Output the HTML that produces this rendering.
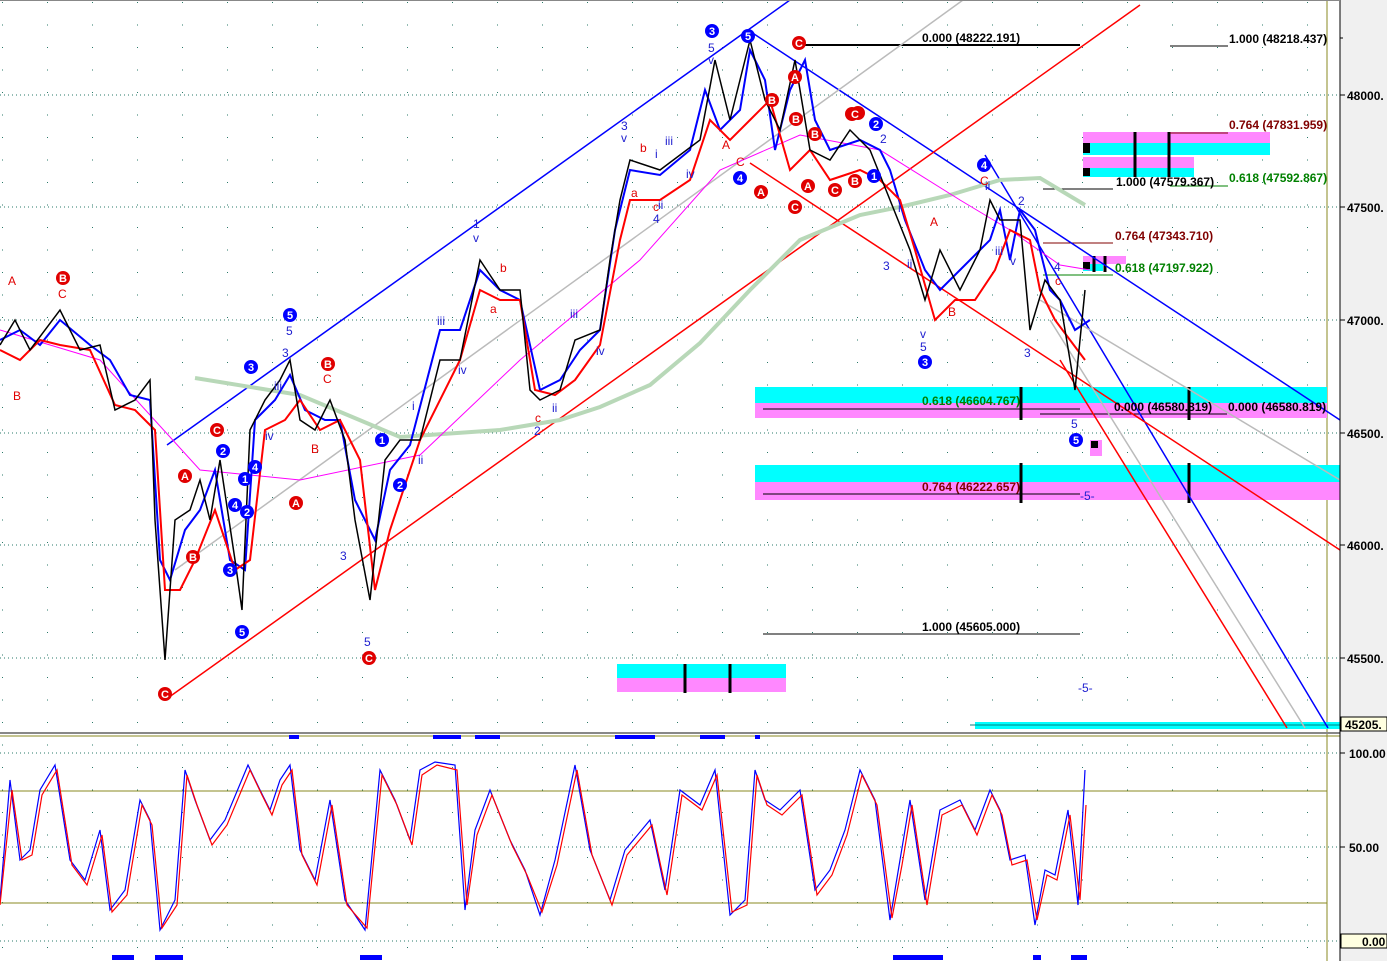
<!DOCTYPE html>
<html><head><meta charset="utf-8"><style>
html,body{margin:0;padding:0;background:#fff;width:1387px;height:961px;overflow:hidden}
svg{display:block;font-family:"Liberation Sans",sans-serif}
.t{font-size:12px;font-weight:bold}
.cl{font-size:11px;font-weight:bold;fill:#fff;text-anchor:middle}
.ax{font-size:12px;font-weight:bold;fill:#000}
</style></head><body>
<svg width="1387" height="961" viewBox="0 0 1387 961" xmlns="http://www.w3.org/2000/svg">
<defs>
<pattern id="dots" x="0" y="0" width="45" height="22.5" patternUnits="userSpaceOnUse"><rect x="2" y="2" width="1" height="1" fill="#2a7a6a"/></pattern>
</defs>
<rect width="1387" height="961" fill="#fff"/>
<rect x="0" y="0" width="1327" height="728" fill="url(#dots)"/>
<rect x="0" y="738" width="1327" height="223" fill="url(#dots)"/>
<g stroke="#2a7a6a" stroke-dasharray="1,3" stroke-width="1">
<line x1="0" y1="95" x2="1337" y2="95"/><line x1="0" y1="207" x2="1337" y2="207"/>
<line x1="0" y1="320" x2="1337" y2="320"/><line x1="0" y1="433" x2="1337" y2="433"/>
<line x1="0" y1="545" x2="1337" y2="545"/><line x1="0" y1="658" x2="1337" y2="658"/>
<line x1="0" y1="753" x2="1337" y2="753"/><line x1="0" y1="847" x2="1337" y2="847"/><line x1="0" y1="941" x2="1337" y2="941"/>
</g>
<line x1="0" y1="791" x2="1327" y2="791" stroke="#888820"/>
<line x1="0" y1="903" x2="1327" y2="903" stroke="#888820"/>
<line x1="1327" y1="0" x2="1327" y2="961" stroke="#888820"/>
<rect x="755" y="387" width="572" height="16" fill="#00ffff"/><rect x="755" y="403" width="572" height="15" fill="#ff88ff"/>
<rect x="755" y="465" width="585" height="17" fill="#00ffff"/><rect x="755" y="482" width="585" height="18" fill="#ff88ff"/>
<rect x="617" y="664" width="169" height="14" fill="#00ffff"/><rect x="617" y="678" width="169" height="14" fill="#ff88ff"/>
<rect x="1083" y="132" width="187" height="11" fill="#ff88ff"/><rect x="1083" y="143" width="187" height="12" fill="#00ffff"/>
<rect x="1083" y="157" width="111" height="11" fill="#ff88ff"/><rect x="1083" y="168" width="111" height="9" fill="#00ffff"/>
<rect x="1083" y="256" width="43" height="8" fill="#ff88ff"/><rect x="1083" y="264" width="20" height="7" fill="#00ffff"/>
<rect x="1090" y="440" width="12" height="16" fill="#ff88ff"/><rect x="1091" y="441" width="7" height="7" fill="#000"/>
<rect x="1083" y="143" width="7" height="10" fill="#000"/><rect x="1083" y="168" width="7" height="8" fill="#000"/><rect x="1083" y="262" width="7" height="7" fill="#000"/>
<rect x="975" y="722" width="365" height="7" fill="#00ffff"/><line x1="970" y1="725" x2="1340" y2="725" stroke="#008080"/>
<g stroke="#000" stroke-width="3">
<line x1="685" y1="664" x2="685" y2="693"/><line x1="730" y1="664" x2="730" y2="693"/>
<line x1="1135" y1="132" x2="1135" y2="177"/><line x1="1169" y1="132" x2="1169" y2="177"/>
<line x1="1021" y1="387" x2="1021" y2="420"/><line x1="1189" y1="387" x2="1189" y2="420"/>
<line x1="1021" y1="463" x2="1021" y2="503"/><line x1="1189" y1="463" x2="1189" y2="503"/>
<line x1="1094" y1="256" x2="1094" y2="272"/><line x1="1105" y1="256" x2="1105" y2="272"/>
</g>
<g stroke="#000" stroke-width="1">
<line x1="800" y1="45" x2="1080" y2="45" stroke-width="2"/><line x1="1170" y1="46" x2="1228" y2="46"/>
<line x1="1043" y1="189" x2="1113" y2="189"/><line x1="763" y1="634" x2="1080" y2="634"/>
<line x1="763" y1="409" x2="1080" y2="409"/><line x1="763" y1="494" x2="1080" y2="494"/>
<line x1="1040" y1="414" x2="1227" y2="414"/>
</g>
<line x1="1170" y1="133" x2="1228" y2="133" stroke="#800000"/>
<line x1="1043" y1="243" x2="1113" y2="243" stroke="#800000"/>
<line x1="1170" y1="186" x2="1228" y2="186" stroke="#008000"/>
<line x1="1043" y1="275" x2="1113" y2="275" stroke="#008000"/>
<g fill="none" stroke-width="1.5">
<polyline stroke="#00f" points="167,445 790,0"/>
<polyline stroke="#00f" points="748,30 1340,420"/>
<polyline stroke="#00f" points="985,155 1328,728"/>
<polyline stroke="#f00" points="165,700 1140,5"/>
<polyline stroke="#f00" points="750,163 1340,550"/>
<polyline stroke="#f00" points="1060,360 1287,728"/>
<polyline stroke="#bbb" points="175,570 963,0"/>
<polyline stroke="#bbb" points="1040,300 1340,480"/>
<polyline stroke="#bbb" points="1050,320 1305,728"/>
<polyline stroke="#b8d8b8" stroke-width="4" points="195,378 300,395 400,437 500,430 560,420 600,407 650,385 700,343 750,290 800,240 860,215 900,207 950,195 1000,180 1040,178 1085,205"/>
<polyline stroke="#ff00ff" stroke-width="1" points="0,330 100,360 200,470 300,480 420,455 520,360 640,260 720,170 800,135 880,150 960,200 1010,230 1060,265 1090,270"/>
</g>
<g fill="none" stroke-width="2">
<polyline stroke="#00f" points="0,340 20,330 40,345 60,320 90,345 110,360 130,395 150,400 160,560 170,580 185,530 200,510 215,470 230,560 245,570 255,420 275,400 290,375 305,410 325,420 340,420 355,500 375,540 390,470 410,445 440,330 460,330 480,270 500,290 520,300 540,390 560,380 580,350 600,330 615,230 630,170 660,175 690,150 705,90 720,130 740,110 750,50 765,80 775,150 790,90 805,60 815,120 830,150 860,140 880,150 890,170 905,220 925,270 940,290 960,270 990,240 1000,210 1010,260 1020,210 1035,230 1050,290 1060,300 1075,330 1090,320"/>
<polyline stroke="#f00" points="0,350 20,360 40,340 60,345 90,350 115,405 135,410 155,430 165,590 180,590 195,560 215,510 235,570 250,560 265,430 285,420 300,400 320,430 340,420 360,460 375,590 390,530 420,440 460,360 480,290 500,300 520,300 535,390 555,395 575,380 600,345 620,240 630,200 660,200 690,180 710,120 730,140 750,120 770,100 790,170 810,150 830,180 860,170 880,180 900,200 915,250 935,320 955,300 975,300 995,270 1010,230 1030,240 1040,290 1055,320 1070,340 1085,360"/>
</g>
<polyline fill="none" stroke="#000" stroke-width="1.5" points="0,345 15,320 30,350 60,310 80,350 100,345 115,410 135,400 150,380 155,520 165,660 175,520 190,510 200,480 210,520 220,460 235,560 242,610 250,430 265,400 280,380 290,360 300,420 315,430 330,400 345,440 355,520 370,600 385,460 400,440 420,440 440,360 460,360 480,260 500,290 520,290 530,390 540,400 560,390 575,340 600,330 610,260 620,200 630,160 660,170 700,140 715,60 730,120 750,40 765,100 780,130 795,60 810,150 830,160 850,130 870,150 890,200 910,250 925,300 940,250 960,290 980,250 990,200 1000,220 1020,220 1030,330 1045,280 1060,300 1075,390 1085,290"/>
<g class="t" font-size="12">
<g fill="#00f">
<circle cx="712" cy="31" r="7"/><circle cx="748" cy="36" r="7"/><circle cx="740" cy="178" r="7"/><circle cx="876" cy="124" r="7"/><circle cx="874" cy="176" r="7"/><circle cx="984" cy="165" r="7"/><circle cx="925" cy="362" r="7"/><circle cx="1076" cy="440" r="7"/><circle cx="290" cy="315" r="7"/><circle cx="251" cy="367" r="7"/><circle cx="223" cy="451" r="7"/><circle cx="255" cy="467" r="7"/><circle cx="245" cy="479" r="7"/><circle cx="235" cy="505" r="7"/><circle cx="247" cy="512" r="7"/><circle cx="230" cy="570" r="7"/><circle cx="242" cy="632" r="7"/><circle cx="382" cy="440" r="7"/><circle cx="400" cy="485" r="7"/>
</g>
<g fill="#e00000">
<circle cx="799" cy="43" r="7"/><circle cx="795" cy="77" r="7"/><circle cx="772" cy="100" r="7"/><circle cx="796" cy="119" r="7"/><circle cx="815" cy="134" r="7"/><circle cx="852" cy="114" r="7"/><circle cx="858" cy="113" r="7"/><circle cx="761" cy="192" r="7"/><circle cx="808" cy="186" r="7"/><circle cx="795" cy="207" r="7"/><circle cx="835" cy="190" r="7"/><circle cx="855" cy="181" r="7"/><circle cx="63" cy="278" r="7"/><circle cx="328" cy="364" r="7"/><circle cx="217" cy="430" r="7"/><circle cx="185" cy="476" r="7"/><circle cx="193" cy="557" r="7"/><circle cx="296" cy="503" r="7"/><circle cx="165" cy="694" r="7"/><circle cx="369" cy="658" r="7"/>
</g>
<g class="cl">
<text x="712" y="35">3</text><text x="748" y="40">5</text><text x="740" y="182">4</text><text x="876" y="128">2</text><text x="874" y="180">1</text><text x="984" y="169">4</text><text x="925" y="366">3</text><text x="1076" y="444">5</text><text x="290" y="319">5</text><text x="251" y="371">3</text><text x="223" y="455">2</text><text x="255" y="471">4</text><text x="245" y="483">1</text><text x="235" y="509">4</text><text x="247" y="516">2</text><text x="230" y="574">3</text><text x="242" y="636">5</text><text x="382" y="444">1</text><text x="400" y="489">2</text>
<text x="799" y="47">C</text><text x="795" y="81">A</text><text x="772" y="104">B</text><text x="796" y="123">B</text><text x="815" y="138">B</text><text x="855" y="118">C</text><text x="761" y="196">A</text><text x="808" y="190">A</text><text x="795" y="211">C</text><text x="835" y="194">C</text><text x="855" y="185">B</text><text x="63" y="282">B</text><text x="328" y="368">B</text><text x="217" y="434">C</text><text x="185" y="480">A</text><text x="193" y="561">B</text><text x="296" y="507">A</text><text x="165" y="698">C</text><text x="369" y="662">C</text>
</g>
<g fill="#2020d0" font-weight="normal">
<text x="708" y="52">5</text><text x="708" y="64">v</text><text x="621" y="130">3</text><text x="621" y="142">v</text><text x="655" y="158">i</text><text x="665" y="145">iii</text><text x="686" y="178">iv</text><text x="653" y="223">4</text><text x="658" y="209">ii</text><text x="473" y="228">1</text><text x="473" y="242">v</text><text x="437" y="325">iii</text><text x="458" y="374">iv</text><text x="570" y="318">iii</text><text x="596" y="355">iv</text><text x="552" y="412">ii</text><text x="534" y="435">2</text><text x="412" y="410">i</text><text x="418" y="464">ii</text><text x="340" y="560">3</text><text x="364" y="646">5</text><text x="286" y="335">5</text><text x="282" y="357">3</text><text x="274" y="390">iii</text><text x="265" y="440">iv</text><text x="883" y="270">3</text><text x="898" y="212">i</text><text x="907" y="268">ii</text><text x="920" y="338">v</text><text x="920" y="351">5</text><text x="880" y="143">2</text><text x="985" y="190">ii</text><text x="995" y="255">iii</text><text x="1018" y="205">2</text><text x="1010" y="265">v</text><text x="1024" y="357">3</text><text x="1071" y="428">5</text><text x="1054" y="271">4</text><text x="1080" y="500">-5-</text><text x="1078" y="692">-5-</text>
</g>
<g fill="#e00000" font-weight="normal">
<text x="8" y="285">A</text><text x="58" y="298">C</text><text x="13" y="400">B</text><text x="323" y="383">C</text><text x="311" y="453">B</text><text x="640" y="152">b</text><text x="631" y="197">a</text><text x="500" y="272">b</text><text x="490" y="313">a</text><text x="535" y="422">c</text><text x="653" y="211">c</text><text x="722" y="149">A</text><text x="736" y="166">C</text><text x="930" y="226">A</text><text x="948" y="316">B</text><text x="980" y="185">C</text><text x="1055" y="285">c</text>
</g>
</g>
<g class="t">
<text x="922" y="42" fill="#000">0.000 (48222.191)</text>
<text x="1229" y="43" fill="#000">1.000 (48218.437)</text>
<text x="1229" y="129" fill="#800000">0.764 (47831.959)</text>
<text x="1116" y="186" fill="#000">1.000 (47579.367)</text>
<text x="1229" y="182" fill="#008000">0.618 (47592.867)</text>
<text x="1115" y="240" fill="#800000">0.764 (47343.710)</text>
<text x="1115" y="272" fill="#008000">0.618 (47197.922)</text>
<text x="922" y="405" fill="#008000">0.618 (46604.767)</text>
<text x="1114" y="411" fill="#000">0.000 (46580.819)</text>
<text x="1228" y="411" fill="#000">0.000 (46580.819)</text>
<text x="922" y="491" fill="#800000">0.764 (46222.657)</text>
<text x="922" y="631" fill="#000">1.000 (45605.000)</text>
</g>
<line x1="0" y1="733" x2="1387" y2="733" stroke="#888" stroke-width="2"/>
<line x1="0" y1="736" x2="1340" y2="736" stroke="#888820"/>
<g fill="none" stroke-width="1.2">
<polyline stroke="#00f" points="0,900 10,780 20,860 30,850 40,790 55,765 70,860 85,880 100,830 110,910 125,890 140,800 150,820 160,930 175,900 185,770 195,800 210,840 225,820 248,765 260,790 270,810 280,780 290,765 300,850 315,880 330,800 345,900 365,930 380,770 395,800 410,840 420,770 435,762 455,765 465,910 475,830 490,790 510,840 525,870 540,915 555,860 575,765 590,850 610,900 625,850 650,820 665,890 680,790 700,805 715,770 730,915 745,900 755,770 765,800 780,810 800,790 815,890 830,870 845,830 860,770 875,800 890,920 900,860 910,800 925,900 940,810 960,800 975,830 990,790 1000,810 1010,860 1025,855 1035,925 1045,870 1055,875 1068,810 1078,905 1085,770"/>
<polyline stroke="#f00" points="0,905 12,790 22,860 32,855 42,795 57,770 72,865 87,885 102,835 112,912 127,895 142,805 152,825 162,928 177,905 187,775 197,805 212,845 227,825 250,770 262,795 272,815 282,785 292,770 302,855 317,885 332,805 347,905 367,928 382,775 397,805 412,845 422,775 437,765 457,770 467,905 477,835 492,795 512,845 527,875 542,912 557,865 577,770 592,855 612,905 627,855 652,825 667,895 682,795 702,810 717,775 732,912 747,905 757,775 767,805 782,815 802,795 817,895 832,875 847,835 862,775 877,805 892,918 902,865 912,805 927,905 942,815 962,805 977,835 992,795 1002,815 1012,865 1027,860 1037,920 1047,875 1057,880 1070,815 1080,900 1086,805"/>
</g>
<g fill="#00f">
<rect x="289" y="735" width="10" height="4"/><rect x="433" y="735" width="28" height="4"/><rect x="475" y="735" width="25" height="4"/><rect x="615" y="735" width="40" height="4"/><rect x="700" y="735" width="25" height="4"/><rect x="755" y="735" width="5" height="4"/>
<rect x="112" y="955" width="22" height="5"/><rect x="155" y="955" width="28" height="5"/><rect x="360" y="955" width="22" height="5"/><rect x="893" y="955" width="50" height="5"/><rect x="1033" y="955" width="8" height="5"/><rect x="1071" y="955" width="16" height="5"/>
</g>
<rect x="1340" y="0" width="47" height="961" fill="#f0f0f0"/>
<line x1="1340" y1="0" x2="1340" y2="961" stroke="#000"/>
<g stroke="#000">
<line x1="1340" y1="95" x2="1345" y2="95"/><line x1="1340" y1="207" x2="1345" y2="207"/><line x1="1340" y1="320" x2="1345" y2="320"/><line x1="1340" y1="433" x2="1345" y2="433"/><line x1="1340" y1="545" x2="1345" y2="545"/><line x1="1340" y1="658" x2="1345" y2="658"/><line x1="1340" y1="38" x2="1343" y2="38"/><line x1="1340" y1="753" x2="1345" y2="753"/><line x1="1340" y1="847" x2="1345" y2="847"/>
</g>
<g class="ax">
<text x="1347" y="100">48000.</text><text x="1347" y="212">47500.</text><text x="1347" y="325">47000.</text><text x="1347" y="438">46500.</text><text x="1347" y="550">46000.</text><text x="1347" y="663">45500.</text>
<text x="1349" y="758">100.00</text><text x="1349" y="852">50.00</text>
</g>
<rect x="1341" y="717" width="46" height="14" fill="#ffffe0" stroke="#000"/><text x="1345" y="729" class="ax">45205.</text>
<rect x="1341" y="934" width="46" height="14" fill="#ffffe0" stroke="#000"/><text x="1362" y="946" class="ax">0.00</text>
<line x1="0" y1="0.5" x2="1340" y2="0.5" stroke="#888"/>
</svg>
</body></html>
